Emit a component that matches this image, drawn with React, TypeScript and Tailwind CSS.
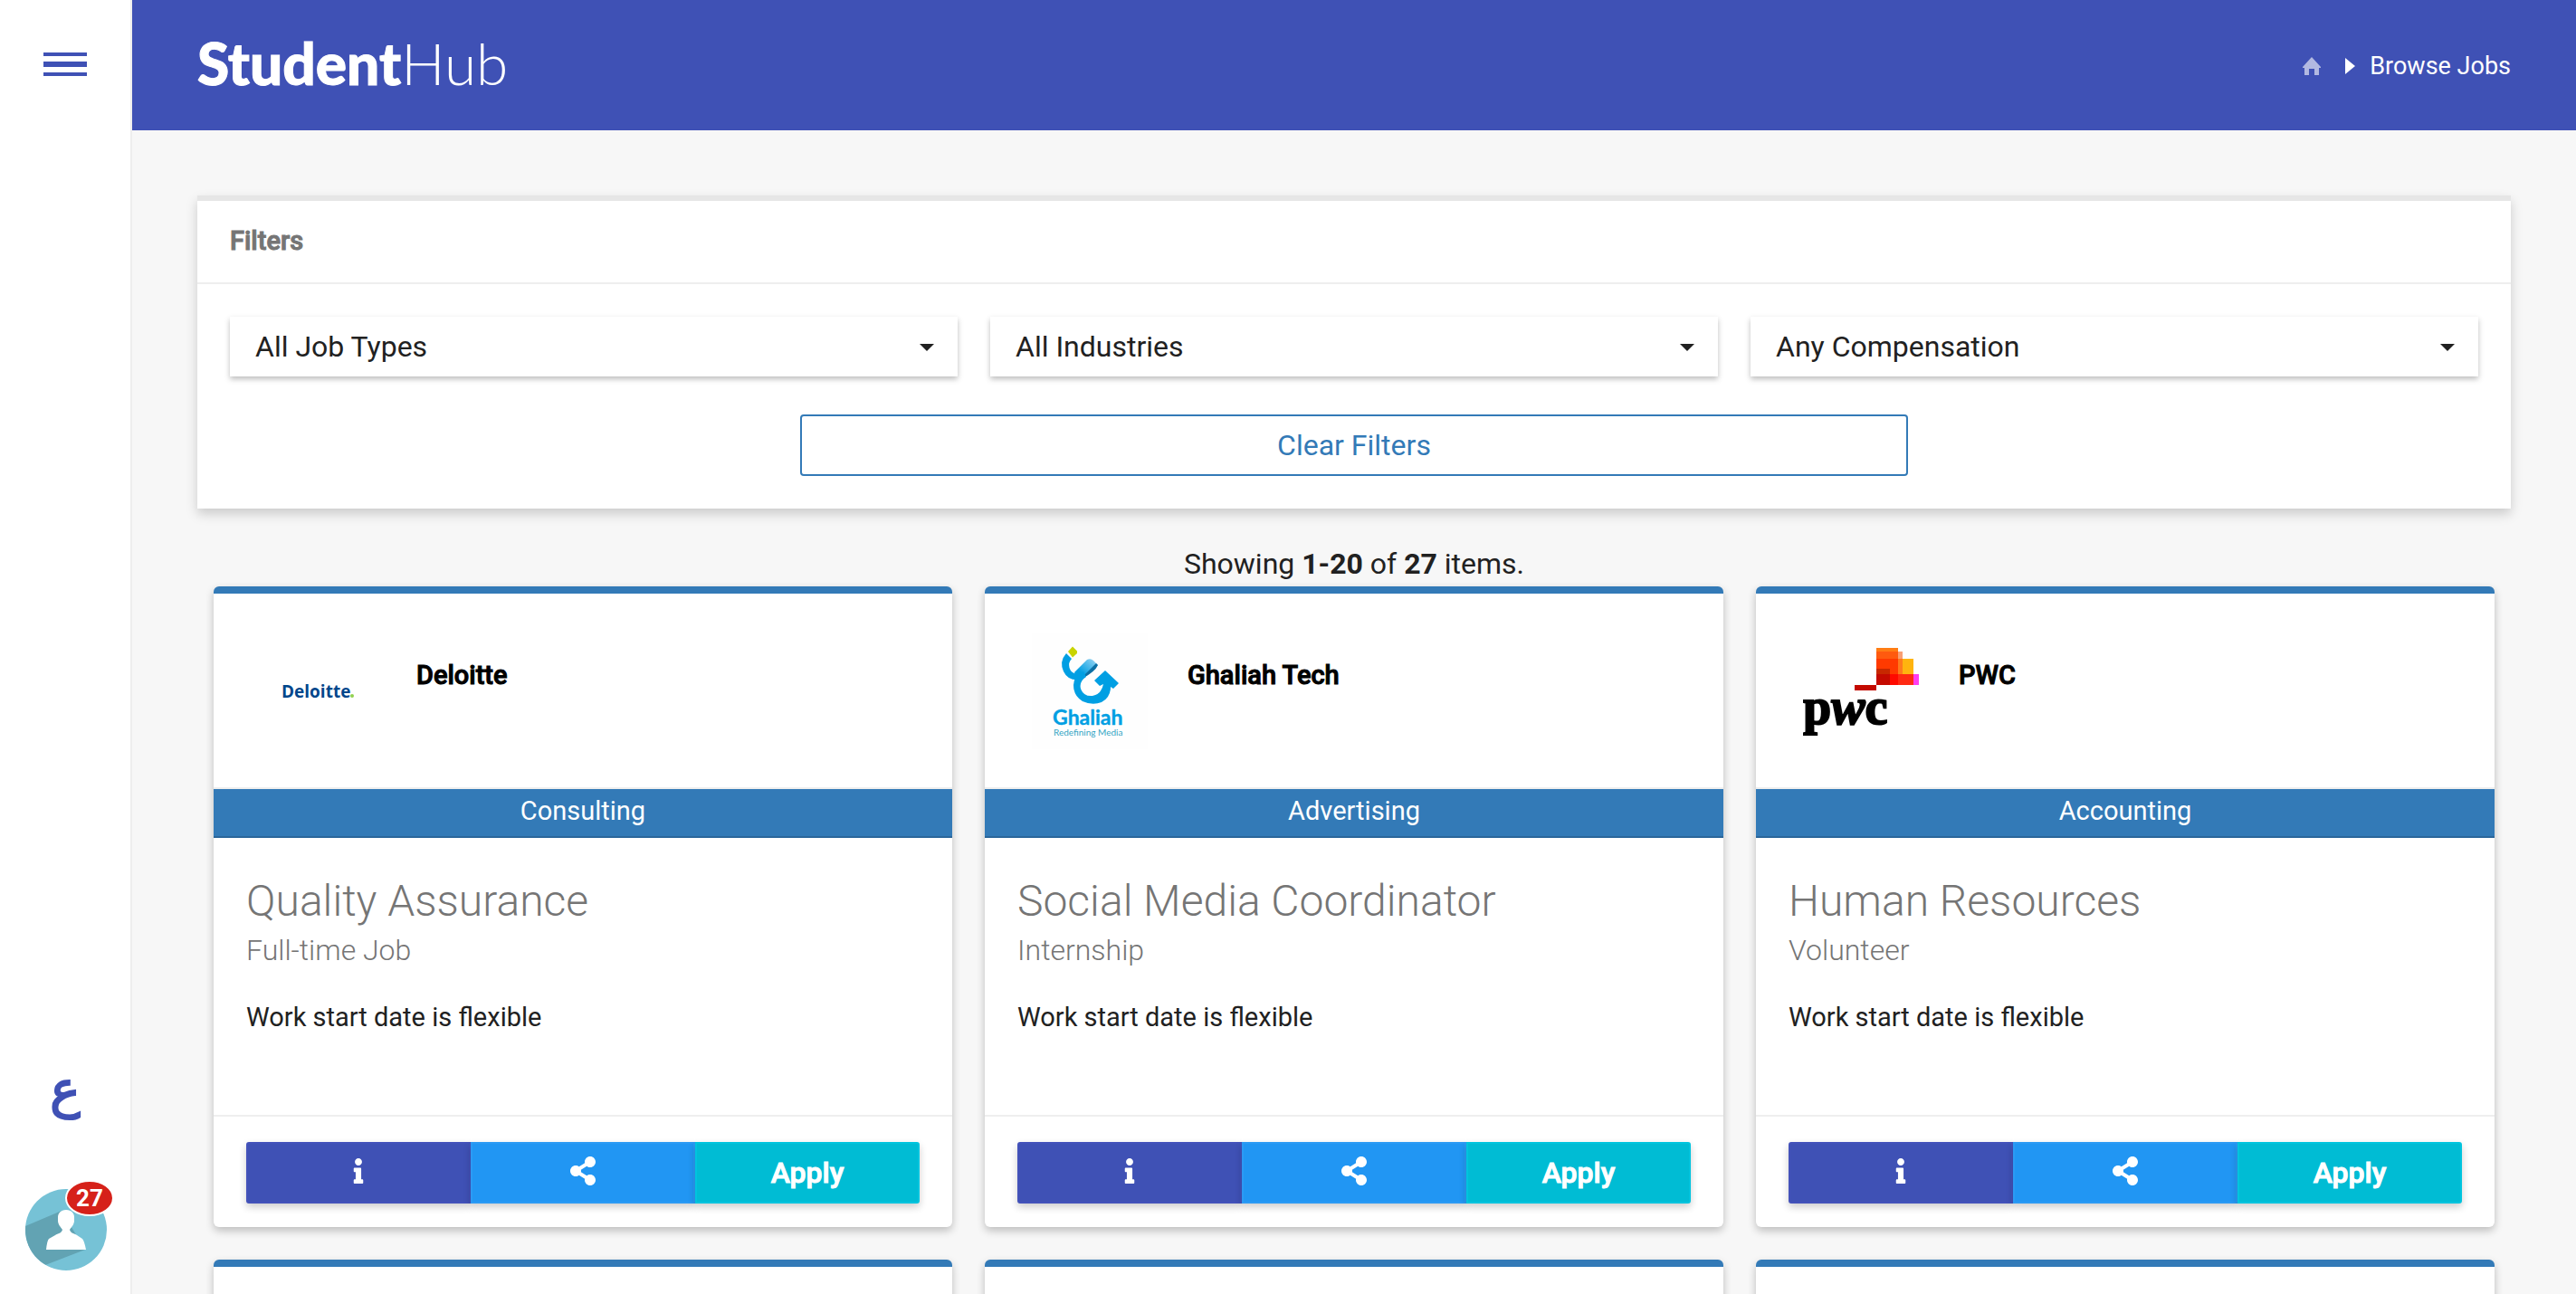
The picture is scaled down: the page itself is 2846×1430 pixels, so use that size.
import React from "react";
import { FaInfo, FaShareAlt } from "react-icons/fa";

type Job = {
  company: string;
  logo: React.ReactNode;
  industry: string;
  title: string;
  type: string;
  start: string;
};

function DeloitteLogo() {
  return (
    <svg viewBox="0 0 128 128" className="size-32" role="img" aria-label="Deloitte logo">
      <text x="23" y="71" fontSize="19" fontWeight="700" fill="#00468b" fontFamily="'Open Sans', sans-serif">
        Deloitte
      </text>
      <circle cx="101" cy="69" r="2" fill="#92d050" />
    </svg>
  );
}

function GhaliahLogo() {
  return (
    <svg viewBox="0 0 128 128" className="size-32" role="img" aria-label="Ghaliah logo">
      <defs>
        <linearGradient id="band" x1="0" y1="1" x2="1" y2="0">
          <stop offset="0.3" stopColor="#009fe3" />
          <stop offset="1" stopColor="#a5d8f3" />
        </linearGradient>
      </defs>
      <rect width="128" height="128" fill="#fefefe" />
      <path d="M45 14.500L50 19.500V22L45 26.500L40 20Z" fill="#c8d400" />
      <path d="M38 22L44 28Q40 32 41.500 38Q44 46 53 44L54 51Q40 53 35 42Q30 31 38 22Z" fill="#009fe3" />
      <path d="M47 43L61 29Q65 27 68 30L73 35L58 49Q50 53 47 43Z" fill="url(#band)" />
      <path d="M57 47L71 33L73 35Q70 42 57 49Z" fill="#0b6fa4" />
      <path
        d="M57 42L60 48Q52 53 54 61Q57 70 67 69Q77 67 79 56L75 58L69 52L81 41L96 55L90 61L87 59Q87 71 77 76Q67 80 56 75Q46 69 46 57Q46 47 57 42Z"
        fill="#009fe3"
      />
      <text x="23" y="101" fontSize="23" fontWeight="700" fill="#009fe3" stroke="#009fe3" strokeWidth="0.4" fontFamily="Lato, sans-serif">
        Ghaliah
      </text>
      <text x="24" y="113" fontSize="10" fill="#35a5c4" fontFamily="Lato, sans-serif">
        Redefining Media
      </text>
    </svg>
  );
}

function PwcLogo() {
  return (
    <svg viewBox="0 0 128 128" className="size-32" role="img" aria-label="PWC logo">
      <rect x="81" y="16" width="24" height="41" fill="#ff7d14" />
      <rect x="105" y="20" width="5" height="37" fill="#f99f74" />
      <rect x="81" y="20" width="24" height="37" fill="#ff5a0f" />
      <rect x="110" y="28" width="12" height="29" fill="#ffb40f" />
      <rect x="105" y="28" width="5" height="29" fill="#ff7a1c" />
      <rect x="81" y="28" width="24" height="29" fill="#ff3a00" />
      <rect x="81" y="39" width="15" height="18" fill="#c72800" />
      <rect x="81" y="45" width="41" height="12" fill="#ff2a12" />
      <rect x="81" y="45" width="24" height="12" fill="#ff0a00" />
      <rect x="81" y="45" width="15" height="12" fill="#c40a00" />
      <rect x="122" y="45" width="6" height="12" fill="#ff3cf0" />
      <rect x="57" y="57" width="24" height="6" fill="#c40a00" />
      <text x="0" y="100" fontSize="56" fontWeight="700" fill="#000" stroke="#000" strokeWidth="2" fontFamily="'Liberation Serif', serif">
        p<tspan fontStyle="italic">w</tspan>c
      </text>
    </svg>
  );
}

const jobs: Job[] = [
  {
    company: "Deloitte",
    logo: <DeloitteLogo />,
    industry: "Consulting",
    title: "Quality Assurance",
    type: "Full-time Job",
    start: "Work start date is flexible",
  },
  {
    company: "Ghaliah Tech",
    logo: <GhaliahLogo />,
    industry: "Advertising",
    title: "Social Media Coordinator",
    type: "Internship",
    start: "Work start date is flexible",
  },
  {
    company: "PWC",
    logo: <PwcLogo />,
    industry: "Accounting",
    title: "Human Resources",
    type: "Volunteer",
    start: "Work start date is flexible",
  },
];

const cardClass =
  "flex flex-col rounded-[6px] border-t-8 border-[#337ab7] bg-white shadow-[0_4px_10px_rgba(0,0,0,0.24)]";

function JobCard({ job }: { job: Job }) {
  return (
    <article className={cardClass}>
      <div className="flex h-[216px] items-start gap-11 border-b-2 border-[#eee] pt-11 pl-[52px]">
        {job.logo}
        <h2 className="pt-[25px] text-[29px] leading-[42px] font-medium text-black [-webkit-text-stroke:1px]">
          {job.company}
        </h2>
      </div>
      <div className="h-[54px] border-b-2 border-[#2b669a] bg-[#337ab7] pt-1 text-center text-[29px] leading-10 text-white">
        {job.industry}
      </div>
      <div className="flex h-[308px] flex-col border-b-2 border-[#eee] px-9 pt-10">
        <h3 className="text-[48px] leading-[60px] font-light text-[#757575]">{job.title}</h3>
        <p className="text-[32px] leading-[48px] font-light text-[#757575]">{job.type}</p>
        <p className="mt-7 text-[29px] leading-[44px]">{job.start}</p>
      </div>
      <div className="flex px-9 pt-7 pb-[26px] text-white">
        <button
          type="button"
          aria-label="Job details"
          className="flex h-[68px] flex-1 items-center justify-center rounded-l-[3px] border-2 border-[#4352ba] bg-[#3f51b5] pb-1 shadow-[0_4px_8px_rgba(0,0,0,0.2)]"
        >
          <FaInfo className="size-7" />
        </button>
        <button
          type="button"
          aria-label="Share job"
          className="flex h-[68px] flex-1 items-center justify-center border-2 border-[#2b9af4] bg-[#2196f3] pb-1 shadow-[0_4px_8px_rgba(0,0,0,0.2)]"
        >
          <FaShareAlt className="size-8" />
        </button>
        <button
          type="button"
          className="h-[68px] flex-1 rounded-r-[3px] border-2 border-[#00c4de] bg-[#00bcd4] text-[32px] leading-10 font-medium shadow-[0_4px_8px_rgba(0,0,0,0.2)] [-webkit-text-stroke:1px]"
        >
          Apply
        </button>
      </div>
    </article>
  );
}

function FilterSelect({ label, id }: { label: string; id: string }) {
  return (
    <div className="relative">
      <select
        id={id}
        aria-label={label}
        className="h-[66px] w-full appearance-none bg-white pr-16 pl-7 text-[32px] shadow-[0_3px_6px_rgba(0,0,0,0.26)] outline-none"
      >
        <option>{label}</option>
      </select>
      <svg viewBox="0 0 16 8" className="pointer-events-none absolute top-[30px] right-[26px] h-2 w-4" fill="#212121" aria-hidden="true">
        <path d="M0 0H16L8 8Z" />
      </svg>
    </div>
  );
}

function Sidebar() {
  return (
    <aside className="flex w-[146px] shrink-0 flex-col items-center border-r-2 border-[#eee] bg-white pt-[58px] pb-[26px]">
      <button type="button" aria-label="Menu" className="flex w-12 flex-col gap-1.5">
        <span className="h-1 w-full bg-[#3f51b5]" />
        <span className="h-1.5 w-full bg-[#3f51b5]" />
        <span className="h-1 w-full bg-[#3f51b5]" />
      </button>
      <a
        href="#ar"
        lang="ar"
        className="mt-auto flex h-12 w-12 items-start justify-center font-['DejaVu_Sans'] text-[56px] leading-[28px] text-[#3f51b5] [-webkit-text-stroke:2px]"
      >
        ع
      </a>
      <a href="#profile" aria-label="Profile, 27 notifications" className="relative mt-[76px] ml-0.5 block size-[90px]">
        <svg viewBox="0 0 90 90" className="size-[90px]" aria-hidden="true">
          <defs>
            <clipPath id="disc">
              <circle cx="45" cy="45" r="45" />
            </clipPath>
          </defs>
          <g clipPath="url(#disc)">
            <rect width="90" height="90" fill="#76c2d6" />
            <path d="M0 41L40 24L66 67L22 84L0 84Z" fill="#62a3b3" />
          </g>
          <path
            d="M45 23C51 23 54 27 54 31V35C54 39 51 42 49 45C50 49 54 49 57 51L63 55Q65 57 67 67H23Q24 57 26 55L33 51C36 49 40 49 41 45C39 42 36 39 36 35V31C36 27 39 23 45 23Z"
            fill="#fff"
          />
        </svg>
        <span className="absolute -top-2.5 -right-2 flex h-10 w-[54px] items-center justify-center rounded-[50%] border-2 border-white bg-[#d6211a] text-[26px] leading-none font-bold text-white">
          27
        </span>
      </a>
    </aside>
  );
}

export default function App() {
  return (
    <div className="flex h-screen overflow-hidden bg-[#f7f7f7] font-[Roboto,sans-serif] text-[#212121]">
      <Sidebar />
      <div className="flex min-w-0 flex-1 flex-col">
        <header className="flex h-36 shrink-0 items-center justify-between bg-[#3f51b5] px-[72px] text-white">
          <a href="#home" className="pb-1 font-[Lato,sans-serif] text-[64px] leading-[72px]">
            <span className="font-black [-webkit-text-stroke:1px]">Student</span>
            <span className="font-light">Hub</span>
          </a>
          <nav aria-label="Breadcrumb" className="flex items-center pt-0.5 text-[27px] leading-10">
            <a href="#home" aria-label="Home">
              <svg viewBox="0 0 20 20" className="size-5 fill-white/60" aria-hidden="true">
                <path d="M10 0L20 11V12H18V20H13V13H7V20H2V12H0V11Z" />
              </svg>
            </a>
            <svg viewBox="0 0 11 18" className="mr-4 ml-[27px] h-[18px] w-[11px] fill-white" aria-hidden="true">
              <path d="M0 0L11 9L0 18Z" />
            </svg>
            <span>Browse Jobs</span>
          </nav>
        </header>
        <main className="px-[72px] pt-[72px]">
          <section className="border-t-[6px] border-[#e6e6e6] bg-white shadow-[0_6px_12px_rgba(0,0,0,0.18)]">
            <h1 className="border-b-2 border-[#eee] px-9 pt-[23px] pb-[25px] text-[29px] leading-[42px] font-medium text-[#757575] [-webkit-text-stroke:1px]">
              Filters
            </h1>
            <div className="p-9">
              <div className="grid grid-cols-3 gap-9">
                <FilterSelect id="job-type" label="All Job Types" />
                <FilterSelect id="industry" label="All Industries" />
                <FilterSelect id="compensation" label="Any Compensation" />
              </div>
              <div className="mt-[42px] flex justify-center px-[630px]">
                <button
                  type="button"
                  className="h-[68px] w-full rounded-[4px] border-2 border-[#337ab7] text-[32px] leading-10 text-[#337ab7]"
                >
                  Clear Filters
                </button>
              </div>
            </div>
          </section>
          <div className="px-[18px] pt-9">
            <p className="pt-[3px] pb-[3px] text-center text-[32px] leading-[44px]">
              Showing <b>1-20</b> of <b>27</b> items.
            </p>
            <div className="grid grid-cols-3 gap-9">
              {jobs.map((job) => (
                <JobCard key={job.company} job={job} />
              ))}
              {jobs.map((job) => (
                <article key={job.company} className={`${cardClass} h-[708px]`} />
              ))}
            </div>
          </div>
        </main>
      </div>
    </div>
  );
}
